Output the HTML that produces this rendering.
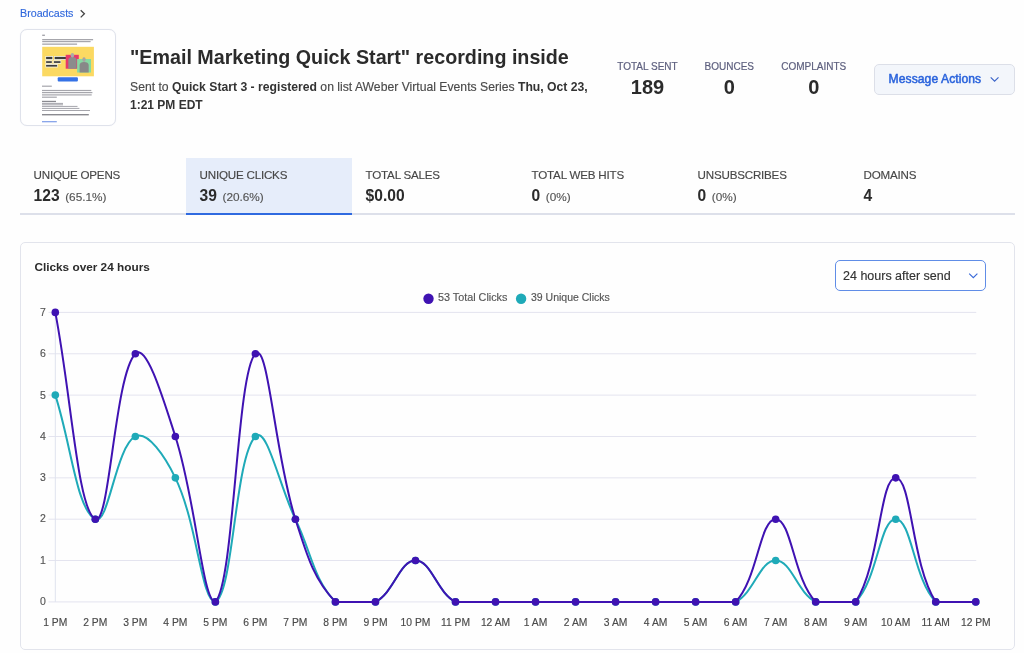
<!DOCTYPE html>
<html><head><meta charset="utf-8">
<style>
*{margin:0;padding:0;box-sizing:border-box}
html,body{width:1024px;height:653px;overflow:hidden;background:#fefefe;font-family:"Liberation Sans",sans-serif;color:#2b2b2b}
.a{position:absolute;white-space:nowrap;line-height:1}
#root{position:absolute;left:0;top:0;width:1024px;height:653px;will-change:transform}
.b{font-weight:bold;-webkit-text-stroke:0 !important}
.s{-webkit-text-stroke:0.15px currentColor}
</style></head><body><div id="root">
<!-- breadcrumb -->
<div class="a" style="left:20px;top:7.9px;font-size:10.7px;color:#3168dc;-webkit-text-stroke:0.15px #3168dc">Broadcasts</div>
<svg class="a" style="left:78px;top:8px" width="10" height="12" viewBox="0 0 10 12"><path d="M2.7,2.2 L6.4,5.8 L2.7,9.4" fill="none" stroke="#444" stroke-width="1.3"/></svg>

<!-- thumbnail -->
<div class="a" style="left:20px;top:29px;width:96px;height:97px;border:1px solid #dfe2eb;border-radius:7px;background:#fff;box-shadow:0 0 1px #e8eaf0;overflow:hidden"></div>
<svg class="a" style="left:0;top:0" width="130" height="130" viewBox="0 0 130 130"><defs><filter id="bl" x="-5%" y="-5%" width="110%" height="110%"><feGaussianBlur stdDeviation="0.25"/></filter></defs><g filter="url(#bl)">
<rect x="42.2" y="34.6" width="2.70" height="1.40" fill="#a6a6ac" rx="0" opacity="1"/>
<rect x="42.2" y="39.0" width="50.90" height="1.30" fill="#a6a6ac" rx="0" opacity="1"/>
<rect x="42.2" y="41.0" width="48.40" height="1.20" fill="#a6a6ac" rx="0" opacity="1"/>
<rect x="42.2" y="43.5" width="34.90" height="1.30" fill="#a6a6ac" rx="0" opacity="1"/>
<rect x="42.2" y="46.8" width="51.70" height="29.50" fill="#fbd962" rx="0" opacity="1"/>
<rect x="45.4" y="56.0" width="7.60" height="4.00" fill="#f3f0e0" rx="0" opacity="1"/>
<rect x="46.1" y="56.9" width="6.20" height="2.20" fill="#3c3c3c" rx="0" opacity="1"/>
<rect x="54.0" y="56.0" width="13.00" height="4.00" fill="#f3f0e0" rx="0" opacity="1"/>
<rect x="54.7" y="56.9" width="11.60" height="2.20" fill="#3c3c3c" rx="0" opacity="1"/>
<rect x="45.4" y="60.3" width="7.10" height="3.50" fill="#f3f0e0" rx="0" opacity="1"/>
<rect x="46.1" y="61.199999999999996" width="5.70" height="1.70" fill="#3c3c3c" rx="0" opacity="1"/>
<rect x="53.2" y="60.3" width="8.00" height="3.50" fill="#f3f0e0" rx="0" opacity="1"/>
<rect x="53.900000000000006" y="61.199999999999996" width="6.60" height="1.70" fill="#3c3c3c" rx="0" opacity="1"/>
<rect x="45.4" y="64.0" width="12.40" height="3.50" fill="#f3f0e0" rx="0" opacity="1"/>
<rect x="46.1" y="64.9" width="11.00" height="1.70" fill="#3c3c3c" rx="0" opacity="1"/>
<rect x="65.7" y="54.8" width="13.10" height="13.90" fill="#e8386a" rx="0" opacity="1"/>
<rect x="77.1" y="59.0" width="13.90" height="13.50" fill="#86d9a2" rx="0" opacity="1"/>
<path d="M68.3,68.7 L68.3,60 Q68.5,57 72.4,57 Q76.3,57 76.6,60 L76.6,68.7 Z" fill="#8c8c8c"/>
<ellipse cx="72.4" cy="55.2" rx="1.7" ry="2.2" fill="#aaa"/>
<path d="M79.6,72.5 L79.6,65 Q79.8,62 84.1,62 Q88.4,62 88.7,65 L88.7,72.5 Z" fill="#888"/>
<ellipse cx="84.0" cy="59.6" rx="1.7" ry="2.3" fill="#a4a4a4"/>
<rect x="57.7" y="77.3" width="20.20" height="4.20" fill="#3572e6" rx="1" opacity="1"/>
<rect x="42.0" y="85.6" width="9.80" height="1.20" fill="#a6a6ac" rx="0" opacity="1"/>
<rect x="42.0" y="89.9" width="49.30" height="1.20" fill="#a6a6ac" rx="0" opacity="1"/>
<rect x="42.0" y="92.0" width="50.40" height="1.20" fill="#a6a6ac" rx="0" opacity="1"/>
<rect x="42.0" y="94.3" width="49.70" height="1.20" fill="#a6a6ac" rx="0" opacity="1"/>
<rect x="42.0" y="96.6" width="14.80" height="1.20" fill="#a6a6ac" rx="0" opacity="1"/>
<rect x="42.0" y="100.8" width="14.00" height="1.30" fill="#8a8a90" rx="0" opacity="1"/>
<rect x="42.0" y="102.9" width="21.00" height="1.00" fill="#a6a6ac" rx="0" opacity="1"/>
<rect x="42.0" y="104.3" width="21.00" height="1.00" fill="#a6a6ac" rx="0" opacity="1"/>
<rect x="42.0" y="105.9" width="35.50" height="1.00" fill="#a6a6ac" rx="0" opacity="1"/>
<rect x="42.0" y="107.9" width="37.40" height="1.00" fill="#a6a6ac" rx="0" opacity="1"/>
<rect x="42.0" y="110.0" width="48.00" height="1.00" fill="#a6a6ac" rx="0" opacity="1"/>
<rect x="42.0" y="114.0" width="46.80" height="1.40" fill="#8a8a90" rx="0" opacity="1"/>
<rect x="42.0" y="121.1" width="14.80" height="1.20" fill="#7e9de8" rx="0" opacity="1"/>
</g></svg>

<!-- title -->
<div class="a b" style="left:130px;top:48px;font-size:19.7px;color:#2b2b2b">"Email Marketing Quick Start" recording inside</div>
<div class="a s" style="left:130px;top:81px;font-size:12.2px;color:#4a4a4a">Sent to <b style="color:#333;-webkit-text-stroke:0">Quick Start 3 - registered</b> on list AWeber Virtual Events Series <b style="color:#333;-webkit-text-stroke:0">Thu, Oct 23,</b></div>
<div class="a b" style="left:130px;top:99.3px;font-size:12px;color:#333">1:21 PM EDT</div>

<!-- stats -->
<div class="a" style="left:597.5px;width:100px;text-align:center;top:62px;font-size:10px;color:#5d5f7e;-webkit-text-stroke:0.2px #5d5f7e">TOTAL SENT</div>
<div class="a" style="left:679.3px;width:100px;text-align:center;top:62px;font-size:10px;color:#5d5f7e;-webkit-text-stroke:0.2px #5d5f7e">BOUNCES</div>
<div class="a" style="left:763.8px;width:100px;text-align:center;top:62px;font-size:10px;color:#5d5f7e;-webkit-text-stroke:0.2px #5d5f7e">COMPLAINTS</div>
<div class="a b" style="left:597.5px;width:100px;text-align:center;top:77px;font-size:20px;color:#2b2b2b">189</div>
<div class="a b" style="left:679.3px;width:100px;text-align:center;top:77px;font-size:20px;color:#2b2b2b">0</div>
<div class="a b" style="left:763.8px;width:100px;text-align:center;top:77px;font-size:20px;color:#2b2b2b">0</div>

<!-- message actions -->
<div class="a" style="left:874px;top:64px;width:141px;height:31px;border:1px solid #dcdfe8;border-radius:5px;background:#f3f6fb"></div>
<div class="a" style="left:888.6px;top:73.1px;font-size:12.1px;letter-spacing:0.08px;color:#2a63dc;-webkit-text-stroke:0.5px #2a63dc">Message Actions</div>
<svg class="a" style="left:989px;top:75px" width="11" height="9" viewBox="0 0 11 9"><path d="M1.7,2.4 L5.6,6.2 L9.5,2.4" fill="none" stroke="#3a63c8" stroke-width="1.15"/></svg>

<!-- tabs -->
<div class="a" style="left:20px;top:213px;width:995px;height:1.5px;background:#dde0ea"></div>
<div class="a" style="left:186px;top:158px;width:166px;height:57px;background:#e6edfa;border-bottom:2px solid #2f6ae0"></div>
<div class="a s" style="left:33.6px;top:169.0px;font-size:11.6px;letter-spacing:-0.2px;color:#474747">UNIQUE OPENS</div>
<div class="a b" style="left:33.6px;top:188px;font-size:15.6px;color:#2b2b2b">123 <span class="s" style="font-weight:normal;font-size:11.8px;margin-left:1.2px;color:#555">(65.1%)</span></div>
<div class="a s" style="left:199.6px;top:169.0px;font-size:11.6px;letter-spacing:-0.2px;color:#474747">UNIQUE CLICKS</div>
<div class="a b" style="left:199.6px;top:188px;font-size:15.6px;color:#2b2b2b">39 <span class="s" style="font-weight:normal;font-size:11.8px;margin-left:1.2px;color:#555">(20.6%)</span></div>
<div class="a s" style="left:365.6px;top:169.0px;font-size:11.6px;letter-spacing:-0.2px;color:#474747">TOTAL SALES</div>
<div class="a b" style="left:365.6px;top:188px;font-size:15.6px;color:#2b2b2b">$0.00</div>
<div class="a s" style="left:531.6px;top:169.0px;font-size:11.6px;letter-spacing:-0.2px;color:#474747">TOTAL WEB HITS</div>
<div class="a b" style="left:531.6px;top:188px;font-size:15.6px;color:#2b2b2b">0 <span class="s" style="font-weight:normal;font-size:11.8px;margin-left:1.2px;color:#555">(0%)</span></div>
<div class="a s" style="left:697.6px;top:169.0px;font-size:11.6px;letter-spacing:-0.2px;color:#474747">UNSUBSCRIBES</div>
<div class="a b" style="left:697.6px;top:188px;font-size:15.6px;color:#2b2b2b">0 <span class="s" style="font-weight:normal;font-size:11.8px;margin-left:1.2px;color:#555">(0%)</span></div>
<div class="a s" style="left:863.6px;top:169.0px;font-size:11.6px;letter-spacing:-0.2px;color:#474747">DOMAINS</div>
<div class="a b" style="left:863.6px;top:188px;font-size:15.6px;color:#2b2b2b">4</div>

<!-- chart card -->
<div class="a" style="left:20px;top:242px;width:995px;height:408px;border:1px solid #e2e4ec;border-radius:5px;background:#fefefe"></div>
<div class="a b" style="left:34.4px;top:261.8px;font-size:11.8px;color:#2b2b2b">Clicks over 24 hours</div>
<div class="a" style="left:835px;top:260px;width:151px;height:31px;border:1px solid #608de7;border-radius:5px;background:#fff"></div>
<div class="a s" style="left:843px;top:270px;font-size:12.5px;color:#333">24 hours after send</div>
<svg class="a" style="left:967px;top:271px" width="12" height="9" viewBox="0 0 12 9"><path d="M2.2,2.6 L6.3,6.6 L10.4,2.6" fill="none" stroke="#3a6ad8" stroke-width="1.15"/></svg>

<!-- legend -->
<svg class="a" style="left:0;top:0" width="1024" height="653">
<circle cx="428.5" cy="298.7" r="5.2" fill="#3f12b2"/>
<circle cx="521.1" cy="298.7" r="5.2" fill="#1faab8"/>
<line x1="48.5" y1="601.90" x2="976.26" y2="601.90" stroke="#e4e4ef" stroke-width="1"/>
<line x1="48.5" y1="560.54" x2="976.26" y2="560.54" stroke="#e4e4ef" stroke-width="1"/>
<line x1="48.5" y1="519.19" x2="976.26" y2="519.19" stroke="#e4e4ef" stroke-width="1"/>
<line x1="48.5" y1="477.83" x2="976.26" y2="477.83" stroke="#e4e4ef" stroke-width="1"/>
<line x1="48.5" y1="436.47" x2="976.26" y2="436.47" stroke="#e4e4ef" stroke-width="1"/>
<line x1="48.5" y1="395.11" x2="976.26" y2="395.11" stroke="#e4e4ef" stroke-width="1"/>
<line x1="48.5" y1="353.76" x2="976.26" y2="353.76" stroke="#e4e4ef" stroke-width="1"/>
<line x1="48.5" y1="312.40" x2="976.26" y2="312.40" stroke="#e4e4ef" stroke-width="1"/>
<line x1="55.30" y1="312.40" x2="55.30" y2="601.90" stroke="#dfe3ee" stroke-width="1"/>
<path d="M55.30,395.11C71.31,444.74 76.54,509.48 95.32,519.19C108.56,526.03 115.65,446.64 135.34,436.47C147.67,430.10 165.55,457.56 175.36,477.83C197.57,523.73 201.49,601.90 215.38,601.90C233.51,592.53 234.61,457.96 255.40,436.47C266.62,424.87 279.41,486.10 295.42,519.19C311.43,552.27 313.14,578.85 335.44,601.90C345.15,601.90 362.33,601.90 375.46,601.90C394.34,592.14 399.47,560.54 415.48,560.54C431.49,560.54 436.62,592.14 455.50,601.90C468.63,601.90 479.51,601.90 495.52,601.90C511.53,601.90 519.53,601.90 535.54,601.90C551.55,601.90 559.55,601.90 575.56,601.90C591.57,601.90 599.57,601.90 615.58,601.90C631.59,601.90 639.59,601.90 655.60,601.90C671.61,601.90 679.61,601.90 695.62,601.90C711.63,601.90 722.51,601.90 735.64,601.90C754.52,592.14 759.65,560.54 775.66,560.54C791.67,560.54 796.80,592.14 815.68,601.90C828.81,601.90 845.99,601.90 855.70,601.90C878.00,578.85 879.71,519.19 895.72,519.19C911.73,519.19 913.44,578.85 935.74,601.90C945.45,601.90 959.75,601.90 975.76,601.90" fill="none" stroke="#1faab8" stroke-width="2"/>
<circle cx="55.30" cy="395.11" r="3.8" fill="#1faab8"/>
<circle cx="95.32" cy="519.19" r="3.8" fill="#1faab8"/>
<circle cx="135.34" cy="436.47" r="3.8" fill="#1faab8"/>
<circle cx="175.36" cy="477.83" r="3.8" fill="#1faab8"/>
<circle cx="215.38" cy="601.90" r="3.8" fill="#1faab8"/>
<circle cx="255.40" cy="436.47" r="3.8" fill="#1faab8"/>
<circle cx="295.42" cy="519.19" r="3.8" fill="#1faab8"/>
<circle cx="335.44" cy="601.90" r="3.8" fill="#1faab8"/>
<circle cx="375.46" cy="601.90" r="3.8" fill="#1faab8"/>
<circle cx="415.48" cy="560.54" r="3.8" fill="#1faab8"/>
<circle cx="455.50" cy="601.90" r="3.8" fill="#1faab8"/>
<circle cx="495.52" cy="601.90" r="3.8" fill="#1faab8"/>
<circle cx="535.54" cy="601.90" r="3.8" fill="#1faab8"/>
<circle cx="575.56" cy="601.90" r="3.8" fill="#1faab8"/>
<circle cx="615.58" cy="601.90" r="3.8" fill="#1faab8"/>
<circle cx="655.60" cy="601.90" r="3.8" fill="#1faab8"/>
<circle cx="695.62" cy="601.90" r="3.8" fill="#1faab8"/>
<circle cx="735.64" cy="601.90" r="3.8" fill="#1faab8"/>
<circle cx="775.66" cy="560.54" r="3.8" fill="#1faab8"/>
<circle cx="815.68" cy="601.90" r="3.8" fill="#1faab8"/>
<circle cx="855.70" cy="601.90" r="3.8" fill="#1faab8"/>
<circle cx="895.72" cy="519.19" r="3.8" fill="#1faab8"/>
<circle cx="935.74" cy="601.90" r="3.8" fill="#1faab8"/>
<circle cx="975.76" cy="601.90" r="3.8" fill="#1faab8"/>
<path d="M55.30,312.40C71.31,395.11 77.61,510.04 95.32,519.19C109.63,526.58 114.55,375.24 135.34,353.76C146.56,342.16 164.14,401.67 175.36,436.47C196.15,500.93 202.45,601.90 215.38,601.90C234.47,582.17 236.31,373.48 255.40,353.76C268.33,340.40 274.63,454.73 295.42,519.19C306.64,553.98 313.14,578.85 335.44,601.90C345.15,601.90 362.33,601.90 375.46,601.90C394.34,592.14 399.47,560.54 415.48,560.54C431.49,560.54 436.62,592.14 455.50,601.90C468.63,601.90 479.51,601.90 495.52,601.90C511.53,601.90 519.53,601.90 535.54,601.90C551.55,601.90 559.55,601.90 575.56,601.90C591.57,601.90 599.57,601.90 615.58,601.90C631.59,601.90 639.59,601.90 655.60,601.90C671.61,601.90 679.61,601.90 695.62,601.90C711.63,601.90 725.93,601.90 735.64,601.90C757.94,578.85 759.65,519.19 775.66,519.19C791.67,519.19 793.38,578.85 815.68,601.90C825.39,601.90 848.18,601.90 855.70,601.90C880.20,563.93 879.71,477.83 895.72,477.83C911.73,477.83 911.24,563.93 935.74,601.90C943.26,601.90 959.75,601.90 975.76,601.90" fill="none" stroke="#3f12b2" stroke-width="2"/>
<circle cx="55.30" cy="312.40" r="3.8" fill="#3f12b2"/>
<circle cx="95.32" cy="519.19" r="3.8" fill="#3f12b2"/>
<circle cx="135.34" cy="353.76" r="3.8" fill="#3f12b2"/>
<circle cx="175.36" cy="436.47" r="3.8" fill="#3f12b2"/>
<circle cx="215.38" cy="601.90" r="3.8" fill="#3f12b2"/>
<circle cx="255.40" cy="353.76" r="3.8" fill="#3f12b2"/>
<circle cx="295.42" cy="519.19" r="3.8" fill="#3f12b2"/>
<circle cx="335.44" cy="601.90" r="3.8" fill="#3f12b2"/>
<circle cx="375.46" cy="601.90" r="3.8" fill="#3f12b2"/>
<circle cx="415.48" cy="560.54" r="3.8" fill="#3f12b2"/>
<circle cx="455.50" cy="601.90" r="3.8" fill="#3f12b2"/>
<circle cx="495.52" cy="601.90" r="3.8" fill="#3f12b2"/>
<circle cx="535.54" cy="601.90" r="3.8" fill="#3f12b2"/>
<circle cx="575.56" cy="601.90" r="3.8" fill="#3f12b2"/>
<circle cx="615.58" cy="601.90" r="3.8" fill="#3f12b2"/>
<circle cx="655.60" cy="601.90" r="3.8" fill="#3f12b2"/>
<circle cx="695.62" cy="601.90" r="3.8" fill="#3f12b2"/>
<circle cx="735.64" cy="601.90" r="3.8" fill="#3f12b2"/>
<circle cx="775.66" cy="519.19" r="3.8" fill="#3f12b2"/>
<circle cx="815.68" cy="601.90" r="3.8" fill="#3f12b2"/>
<circle cx="855.70" cy="601.90" r="3.8" fill="#3f12b2"/>
<circle cx="895.72" cy="477.83" r="3.8" fill="#3f12b2"/>
<circle cx="935.74" cy="601.90" r="3.8" fill="#3f12b2"/>
<circle cx="975.76" cy="601.90" r="3.8" fill="#3f12b2"/>
</svg>
<div class="a s" style="left:438px;top:291.8px;font-size:10.8px;color:#555">53 Total Clicks</div>
<div class="a s" style="left:531px;top:291.8px;font-size:10.5px;color:#555">39 Unique Clicks</div>
<div class="a s" style="left:0;width:45.8px;text-align:right;top:595.9px;font-size:10.5px;color:#555">0</div>
<div class="a s" style="left:0;width:45.8px;text-align:right;top:554.6px;font-size:10.5px;color:#555">1</div>
<div class="a s" style="left:0;width:45.8px;text-align:right;top:513.4px;font-size:10.5px;color:#555">2</div>
<div class="a s" style="left:0;width:45.8px;text-align:right;top:472.1px;font-size:10.5px;color:#555">3</div>
<div class="a s" style="left:0;width:45.8px;text-align:right;top:430.8px;font-size:10.5px;color:#555">4</div>
<div class="a s" style="left:0;width:45.8px;text-align:right;top:389.6px;font-size:10.5px;color:#555">5</div>
<div class="a s" style="left:0;width:45.8px;text-align:right;top:348.3px;font-size:10.5px;color:#555">6</div>
<div class="a s" style="left:0;width:45.8px;text-align:right;top:307.0px;font-size:10.5px;color:#555">7</div>
<div class="a s" style="left:25.3px;width:60px;text-align:center;top:617.7px;font-size:10.3px;color:#4a4a4a">1 PM</div>
<div class="a s" style="left:65.3px;width:60px;text-align:center;top:617.7px;font-size:10.3px;color:#4a4a4a">2 PM</div>
<div class="a s" style="left:105.3px;width:60px;text-align:center;top:617.7px;font-size:10.3px;color:#4a4a4a">3 PM</div>
<div class="a s" style="left:145.4px;width:60px;text-align:center;top:617.7px;font-size:10.3px;color:#4a4a4a">4 PM</div>
<div class="a s" style="left:185.4px;width:60px;text-align:center;top:617.7px;font-size:10.3px;color:#4a4a4a">5 PM</div>
<div class="a s" style="left:225.4px;width:60px;text-align:center;top:617.7px;font-size:10.3px;color:#4a4a4a">6 PM</div>
<div class="a s" style="left:265.4px;width:60px;text-align:center;top:617.7px;font-size:10.3px;color:#4a4a4a">7 PM</div>
<div class="a s" style="left:305.4px;width:60px;text-align:center;top:617.7px;font-size:10.3px;color:#4a4a4a">8 PM</div>
<div class="a s" style="left:345.5px;width:60px;text-align:center;top:617.7px;font-size:10.3px;color:#4a4a4a">9 PM</div>
<div class="a s" style="left:385.5px;width:60px;text-align:center;top:617.7px;font-size:10.3px;color:#4a4a4a">10 PM</div>
<div class="a s" style="left:425.5px;width:60px;text-align:center;top:617.7px;font-size:10.3px;color:#4a4a4a">11 PM</div>
<div class="a s" style="left:465.5px;width:60px;text-align:center;top:617.7px;font-size:10.3px;color:#4a4a4a">12 AM</div>
<div class="a s" style="left:505.5px;width:60px;text-align:center;top:617.7px;font-size:10.3px;color:#4a4a4a">1 AM</div>
<div class="a s" style="left:545.6px;width:60px;text-align:center;top:617.7px;font-size:10.3px;color:#4a4a4a">2 AM</div>
<div class="a s" style="left:585.6px;width:60px;text-align:center;top:617.7px;font-size:10.3px;color:#4a4a4a">3 AM</div>
<div class="a s" style="left:625.6px;width:60px;text-align:center;top:617.7px;font-size:10.3px;color:#4a4a4a">4 AM</div>
<div class="a s" style="left:665.6px;width:60px;text-align:center;top:617.7px;font-size:10.3px;color:#4a4a4a">5 AM</div>
<div class="a s" style="left:705.6px;width:60px;text-align:center;top:617.7px;font-size:10.3px;color:#4a4a4a">6 AM</div>
<div class="a s" style="left:745.7px;width:60px;text-align:center;top:617.7px;font-size:10.3px;color:#4a4a4a">7 AM</div>
<div class="a s" style="left:785.7px;width:60px;text-align:center;top:617.7px;font-size:10.3px;color:#4a4a4a">8 AM</div>
<div class="a s" style="left:825.7px;width:60px;text-align:center;top:617.7px;font-size:10.3px;color:#4a4a4a">9 AM</div>
<div class="a s" style="left:865.7px;width:60px;text-align:center;top:617.7px;font-size:10.3px;color:#4a4a4a">10 AM</div>
<div class="a s" style="left:905.7px;width:60px;text-align:center;top:617.7px;font-size:10.3px;color:#4a4a4a">11 AM</div>
<div class="a s" style="left:945.8px;width:60px;text-align:center;top:617.7px;font-size:10.3px;color:#4a4a4a">12 PM</div>
</div></body></html>
